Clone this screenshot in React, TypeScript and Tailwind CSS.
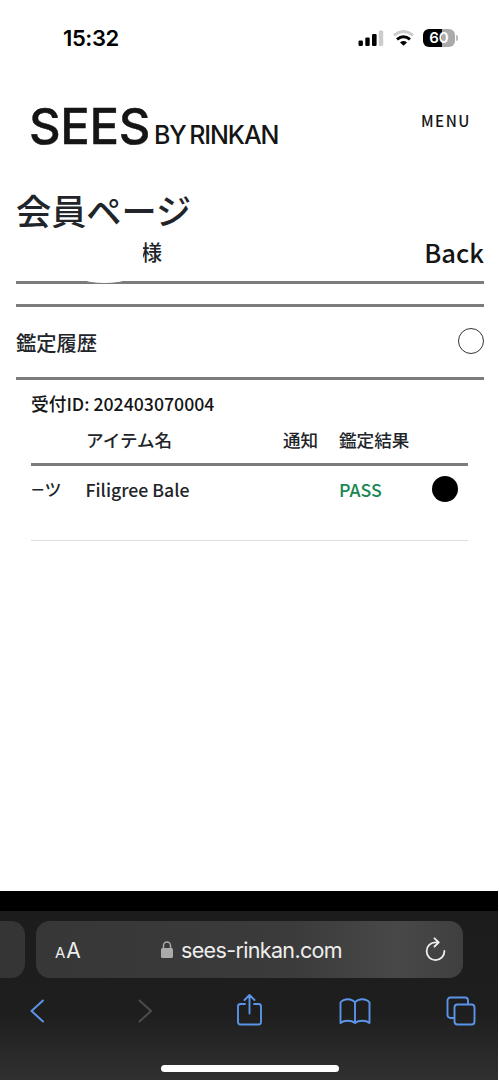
import React from 'react';

const StatusBar: React.FC = () => {
  return (
    <div className="flex h-[76px] items-center justify-between pl-[63px] pr-[41px] text-black">
      <span className="font-['Inter'] text-[22px] font-semibold leading-[22px] tracking-[-0.4px]">15:32</span>
      <div className="flex items-center">
        {/* Signal */}
        <svg width="26" height="16" viewBox="0 0 26 16">
          <rect x="0.5" y="10.5" width="4.4" height="5.5" rx="1.2" fill="#000" />
          <rect x="7.3" y="7.5" width="4.4" height="8.5" rx="1.2" fill="#000" />
          <rect x="14" y="4" width="4.6" height="12" rx="1.2" fill="#000" />
          <rect x="20.8" y="0.5" width="4.4" height="15.5" rx="1.2" fill="#ccc" />
        </svg>
        {/* Wifi */}
        <svg className="ml-[9px]" width="21" height="16" viewBox="0 0 21 16" fill="none">
          <path d="M1 5.3Q10.5 -2.3 20 5.3" stroke="#ccc" strokeWidth="3" />
          <path d="M4 9.4Q10.5 4 17 9.4" stroke="#000" strokeWidth="3" />
          <path d="M7 12.4Q10.5 9.6 14 12.4L10.5 15.8Z" fill="#000" />
        </svg>
        {/* Battery */}
        <div className="ml-[9px] flex h-[18px] w-8 items-center justify-center rounded-[6px] bg-[linear-gradient(90deg,#000_60%,#aaa_60%)] font-['Inter'] text-[15px] font-semibold leading-[18px] text-white">
          60
        </div>
        <div className="ml-[1px] h-[6px] w-[2px] rounded-r-full bg-[#bbb]" />
      </div>
    </div>
  );
};

const SiteHeader: React.FC = () => {
  return (
    <header className="flex h-[110px] justify-between pl-[29px] pr-[28px] text-[#151515]">
      <h1 className="flex items-baseline pt-[22px] font-['Inter'] leading-[58px]">
        <span className="w-[125px] whitespace-nowrap text-[49px] font-medium tracking-[-0.3px] [-webkit-text-stroke:0.4px_#151515]">SEES</span>
        <span className="whitespace-nowrap text-[25px] font-medium tracking-[-1.1px] [word-spacing:-2px]">BY RINKAN</span>
      </h1>
      <span className="pt-[33px] text-[15.2px] font-medium leading-[22px] tracking-[1.5px]">MENU</span>
    </header>
  );
};

const MemberPage: React.FC = () => {
  return (
    <main className="h-[705px] pl-4 pr-[15px] text-[#212529]">
      <h2 className="h-[50px] text-[35.2px] leading-[48px]">会員ページ</h2>
      <div className="flex h-[45px] justify-between">
        <span className="relative pl-[125px] text-[21px] leading-[30px]">
          様
          <span className="absolute left-[124px] top-[4px] h-[22px] w-[3px] bg-white" />
        </span>
        <span className="text-[25.6px] leading-[32px] text-[#151515]">Back</span>
      </div>
      <div className="relative h-[3px] bg-[#7c7c7c]">
        <span className="absolute left-[70px] top-[-4px] h-[6px] w-[37px] rounded-b-[50%] bg-white" />
      </div>
      <div className="mt-[20px] h-[3px] bg-[#7c7c7c]" />

      {/* History */}
      <div className="flex h-[70px] items-center justify-between">
        <span className="text-[20.3px]">鑑定履歴</span>
        <span className="mb-[3px] h-[26px] w-[26px] rounded-full border-[1.5px] border-[#333]" />
      </div>
      <div className="h-[3px] bg-[#7c7c7c]" />
      <div className="pl-[15px] pr-4">
        <p className="h-[43px] pt-[10px] text-[17.7px] leading-[26px] text-[#151515]">受付ID: 202403070004</p>
        <div className="grid h-[40px] grid-cols-[55px_197px_56px_1fr] pt-[4px] text-[17.6px] leading-[26px]">
          <span />
          <span>アイテム名</span>
          <span>通知</span>
          <span>鑑定結果</span>
        </div>
        <div className="h-[3px] bg-[#7c7c7c]" />
        <div className="grid h-[75px] grid-cols-[54.5px_253.5px_93px_1fr] border-b border-[#ddd] pt-[10px] text-[17.8px] leading-[26px]">
          <span className="flex whitespace-nowrap">
            <span className="text-[13.5px]">ー</span>
            <span className="text-[17px]">ツ</span>
          </span>
          <span className="text-[17.7px]">Filigree Bale</span>
          <span className="text-[#198754]">PASS</span>
          <span className="h-[26px] w-[26px] rounded-full bg-black" />
        </div>
      </div>
    </main>
  );
};

const BrowserBar: React.FC = () => {
  return (
    <footer className="mr-[1px] h-[189px] border-t-[20px] border-black bg-[linear-gradient(180deg,#1c1c1c,#1e1e1e_60%,#303030)] font-['Inter'] font-normal">
      <div className="flex h-[67px] gap-[11px] pt-[10px]">
        <div className="h-[57px] w-[25px] rounded-r-[14px] bg-[#353535]" />
        <div className="flex h-[57px] w-[427px] items-center rounded-[14px] bg-[linear-gradient(90deg,#373737,#3b3b3b_60%,#484848_85%,#3f3f3f)] pl-[19px] pr-4 text-[#eee]">
          <span className="flex w-[106px] items-baseline gap-[1px] pt-[2px]">
            <span className="text-[15px]">A</span>
            <span className="text-[21px]">A</span>
          </span>
          <svg width="12" height="17" viewBox="0 0 12 17">
            <rect y="7" width="12" height="10" rx="1.5" fill="#aaa" />
            <path d="M2.5 8V4.5a3.5 3.5 0 0 1 7 0V8" fill="none" stroke="#aaa" strokeWidth="1.5" />
          </svg>
          <span className="ml-[8px] whitespace-nowrap pt-[2px] text-[21.5px] tracking-[-0.65px]">sees-rinkan.com</span>
          <svg className="ml-auto" width="23" height="25" viewBox="0 0 23 25" fill="none" stroke="#eee" strokeWidth="1.8" strokeLinecap="round" strokeLinejoin="round">
            <path d="M14 5.3H11.5A8.9 8.9 0 1 0 20.4 14M10.5 1.3l4.3 4-4.3 4.2" />
          </svg>
        </div>
      </div>
      <div className="flex h-[66px] items-center pl-[30px] text-[#5b94e8]">
        <svg width="14" height="24" viewBox="0 0 14 24" fill="none" stroke="currentColor" strokeWidth="2" strokeLinecap="round" strokeLinejoin="round">
          <path d="M13 1.5 1.5 12 13 22.5" />
        </svg>
        <svg className="ml-[94px]" width="14" height="24" viewBox="0 0 14 24" fill="none" stroke="#4c4c4c" strokeWidth="2" strokeLinecap="round" strokeLinejoin="round">
          <path d="M1.5 1.5 13 12 1.5 22.5" />
        </svg>
        <svg className="mb-[2px] ml-[84px]" width="27" height="34" viewBox="0 0 27 34" fill="none" stroke="currentColor" strokeWidth="1.9" strokeLinecap="round" strokeLinejoin="round">
          <path d="M9 11H4.5A2.5 2.5 0 0 0 2 13.5V29a2.5 2.5 0 0 0 2.5 2.5h18A2.500 2.500 0 0 0 25 29V13.500a2.500 2.500 0 0 0-2.500-2.500H18M13.500 20.500V2M8.500 7l5-5 5 5" />
        </svg>
        <svg className="ml-[76px]" width="32" height="27" viewBox="0 0 32 27" fill="none" stroke="currentColor" strokeWidth="1.9" strokeLinejoin="round">
          <path d="M16 4.5C12.5.2 5 .2 1.500 4.500V25C5 22 12.500 22 16 25c3.500-3 11-3 14.500 0V4.500C27 .2 19.500.2 16 4.500V25" />
        </svg>
        <svg className="ml-[75px]" width="30" height="30" viewBox="0 0 30 30" fill="none" stroke="currentColor" strokeWidth="1.9" strokeLinejoin="round">
          <rect x="8.5" y="8.5" width="20" height="20" rx="3" />
          <path d="M8.5 22h-4a3 3 0 0 1-3-3V4.500a3 3 0 0 1 3-3H19a3 3 0 0 1 3 3v4" />
        </svg>
      </div>
      <div className="ml-[161px] mt-[21px] h-[7px] w-[178px] rounded-full bg-white" />
    </footer>
  );
};

const App: React.FC = () => {
  return (
    <div className="h-[1080px] w-[499px] overflow-hidden bg-white font-['Noto_Sans_CJK_JP',sans-serif] font-medium">
      <StatusBar />
      <SiteHeader />
      <MemberPage />
      <BrowserBar />
    </div>
  );
};

export default App;
